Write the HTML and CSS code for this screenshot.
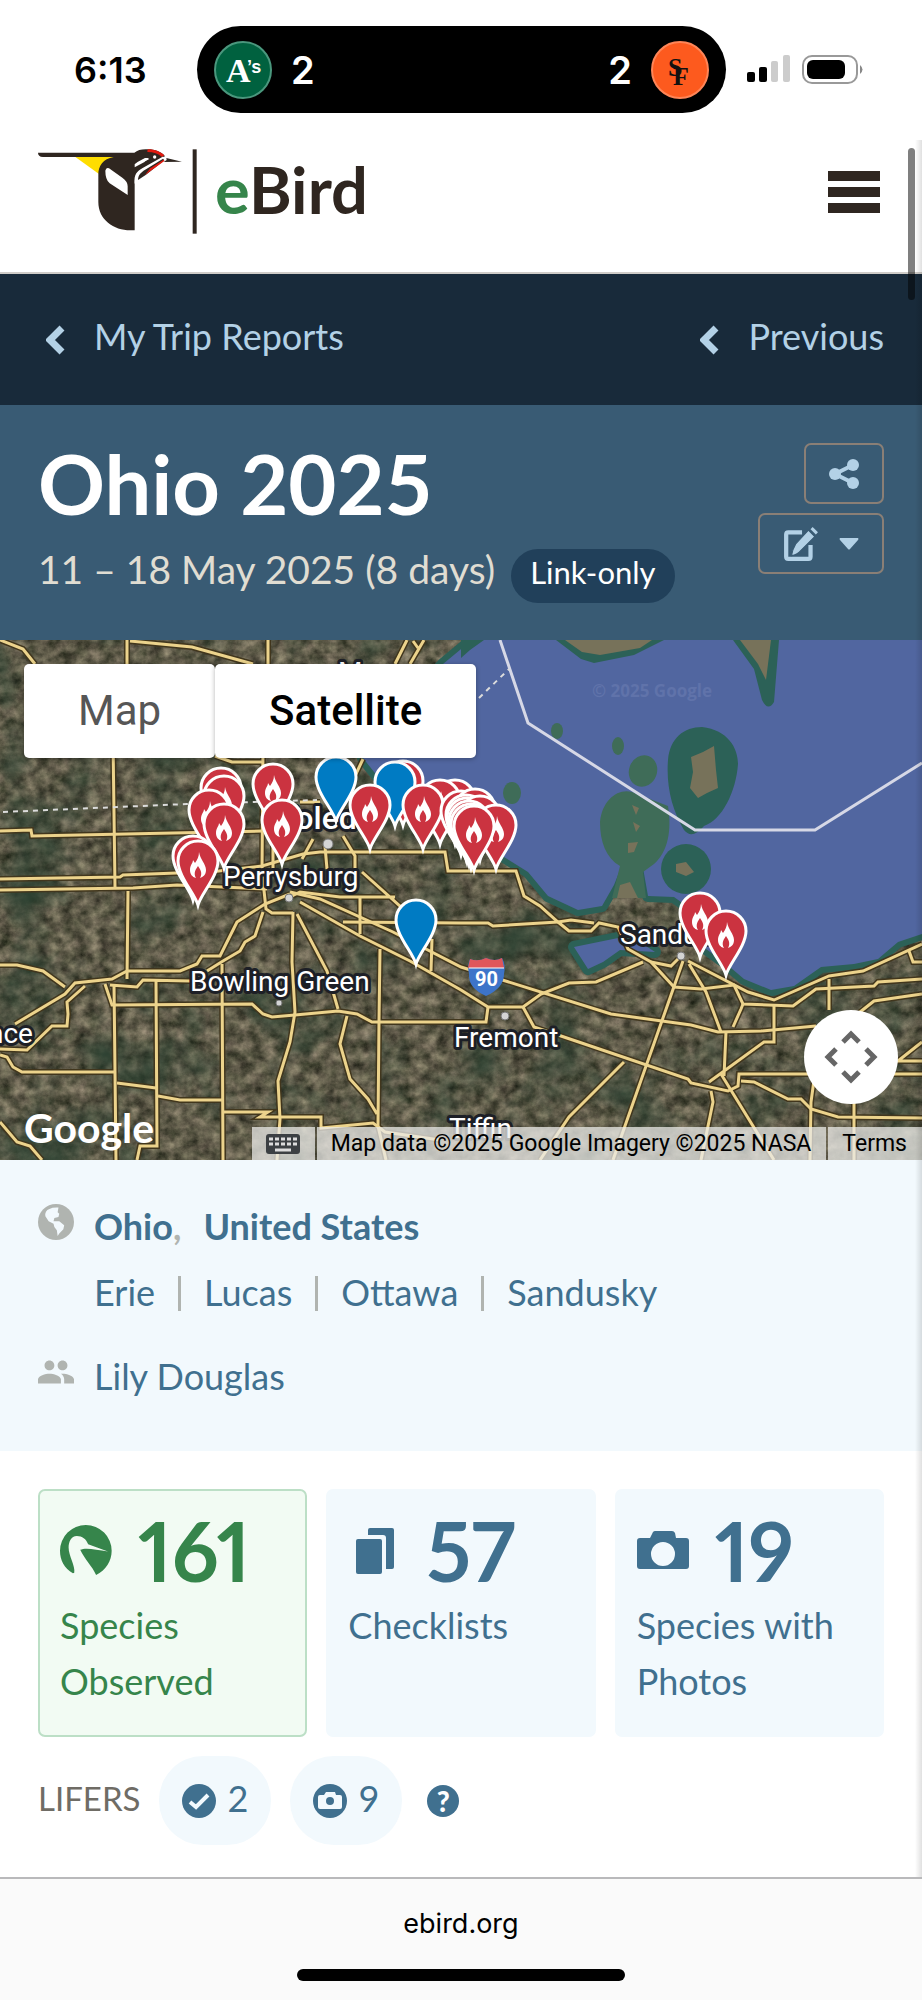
FILE: index.html
```html
<!DOCTYPE html>
<html lang="en">
<head>
    <meta charset="UTF-8">
    <meta name="viewport" content="width=device-width, initial-scale=1.0">
    <title>Ohio 2025 - eBird Trip Report</title>
    <link rel="stylesheet" href="styles.css">
</head>
<body>
    <div class="status-bar">
        <span class="clock">6:13</span>
        <div class="island">
            <svg class="team" viewBox="0 0 58 58">
                <circle cx="29" cy="29" r="28" fill="#00613f" stroke="#4a977d" stroke-width="2"/>
                <text x="12" y="41" class="team-a">A</text>
                <text x="33" y="32" class="team-s">’s</text>
            </svg>
            <span class="score">2</span>
            <span class="score score-right">2</span>
            <svg class="team" viewBox="0 0 58 58">
                <circle cx="29" cy="29" r="28" fill="#fd5a1e" stroke="#ff8557" stroke-width="2"/>
                <text x="17" y="35" class="team-sf">S</text>
                <text x="22" y="44" class="team-sf">F</text>
            </svg>
        </div>
        <div class="indicators">
            <svg width="44" height="28" viewBox="0 0 44 28">
                <rect x="0" y="17" width="8" height="10" rx="2"/>
                <rect x="12" y="12" width="8" height="15" rx="2"/>
                <rect x="24" y="6" width="7" height="21" rx="2" fill="#ccc"/>
                <rect x="36" y="0" width="7" height="27" rx="2" fill="#ccc"/>
            </svg>
            <svg width="62" height="30" viewBox="0 0 62 30">
                <rect x="1" y="1" width="54" height="27" rx="9" fill="none" stroke="#999" stroke-width="2"/>
                <rect x="5" y="5" width="38" height="19" rx="6"/>
                <path d="M58 10q5 4.500 0 9z" fill="#888"/>
            </svg>
        </div>
    </div>

    <header class="site-header">
        <a href="#" class="logo">
            <svg width="160" height="85" viewBox="113 448 480 255">
                <path d="M222 470H350L297 524z" fill="#fedd00"/>
                <path d="M113 459H402C412 451 425 448 442 449C465 449 482 457 493 468L490 480L420 524C408 530 403 538 403 548V692H390C340 692 294 660 294 607V525C294 498 308 478 340 472H128C118 472 113 466 113 459z" fill="#2f2620"/>
                <path d="M442 449C465 449 482 457 492 467L485 472C474 462 460 457 441 457z" fill="#e21a0f"/>
                <path d="M315 513Q317 502 326 506L366 534Q382 545 382 560V586L328 551Q315 540 315 513z" fill="#fff"/>
                <path d="M403 503V494Q405 490 434 475H442L448 479Z" fill="#fff"/>
                <path d="M433 486L456 473V480L440 491z" fill="#2f2620"/>
                <circle cx="463" cy="472" r="5" fill="#fff"/>
                <path d="M403 552C400 525 410 514 427 505L487 471L495 472L493 480L436 527L413 541z" fill="#fff"/>
                <path d="M413 541C413 528 421 519 432 512L488 477L492 482L437 525z" fill="#2f2620"/>
                <path d="M434 526L450 506L490 480L492 484z" fill="#e21a0f"/>
                <path d="M498 475L545 486L490 487L499 481z" fill="#2f2620"/>
                <rect x="577" y="449" width="12" height="253" fill="#2f2620"/>
            </svg>
            <span class="wordmark"><span class="wordmark-e">e</span>Bird</span>
        </a>
        <button class="menu-button" aria-label="Menu"><span></span><span></span><span></span></button>
    </header>

    <nav class="report-nav">
        <a href="#">
            <svg width="20" height="30" viewBox="0 0 20 30"><path d="M16 3L4 15L16 27" fill="none" stroke="currentColor" stroke-width="7"/></svg>
            My Trip Reports
        </a>
        <a href="#">
            <svg width="20" height="30" viewBox="0 0 20 30"><path d="M16 3L4 15L16 27" fill="none" stroke="currentColor" stroke-width="7"/></svg>
            Previous
        </a>
    </nav>

    <section class="report-header">
        <div class="report-title">
            <h1>Ohio 2025</h1>
            <div class="report-dates">
                <span>11 – 18 May 2025 (8 days)</span>
                <span class="badge">Link-only</span>
            </div>
        </div>
        <div class="report-actions">
            <button aria-label="Share">
                <svg width="30" height="30" viewBox="0 0 30 30" fill="currentColor">
                    <path d="M24 6L6 15L24 24" fill="none" stroke="currentColor" stroke-width="4"/>
                    <circle cx="6" cy="15" r="6"/><circle cx="24" cy="6" r="6"/><circle cx="24" cy="24" r="6"/>
                </svg>
            </button>
            <button aria-label="Edit">
                <svg width="36" height="36" viewBox="0 0 34 34">
                    <path d="M18 6H5Q3 6 3 8V29Q3 31 5 31H24Q26 31 26 29V18" fill="none" stroke="currentColor" stroke-width="4"/>
                    <path d="M24 4L30 10L17 23Q14 27 8 28Q9 22 12 17z" fill="currentColor" stroke="#395b74" stroke-width="1"/>
                    <path d="M26 3L28 1L33 6L31 8z" fill="currentColor"/>
                </svg>
                <svg width="20" height="12" viewBox="0 0 20 12"><path d="M1 0H19Q20 1 19 2L11 11Q10 12 9 11L1 2Q0 1 1 0z" fill="currentColor"/></svg>
            </button>
        </div>
    </section>

    <section class="map">
        <svg class="map-canvas" viewBox="0 0 922 520">
            <defs>
                <filter id="ground" x="0" y="0" width="100%" height="100%" color-interpolation-filters="sRGB">
                    <feTurbulence type="fractalNoise" baseFrequency="0.08 0.09" numOctaves="5" seed="8"/>
                    <feColorMatrix values="0.6 0 0 0 0.07  0.54 0.04 0 0 0.065  0.48 0 0 0 0.045  0 0 0 0 1"/>
                </filter>
                <filter id="forest" x="0" y="0" width="100%" height="100%" color-interpolation-filters="sRGB">
                    <feTurbulence type="fractalNoise" baseFrequency="0.015" numOctaves="5" seed="3"/>
                    <feColorMatrix values="0 0 0 0 0.16  0 0 0 0 0.25  0 0 0 0 0.19  0 2.200 0 0 -1.050"/>
                </filter>
                <g id="pin">
                    <path d="M0 -2C-3 -13 -20 -31 -20 -46A20 20 0 0 1 20 -46C20 -31 3 -13 0 -2z" stroke="#fff" stroke-width="3"/>
                </g>
                <g id="fire">
                    <use href="#pin" fill="#cb3340"/>
                    <path d="M1 -55C2 -48 8 -43 8 -37C8 -32 5 -30 2 -29C5 -34 2 -38 0 -41C-2 -38 -5 -34 -2 -29C-6 -30 -8 -33 -8 -37C-8 -42 -5 -44 -5 -47L-3 -44C-1 -47 1 -50 1 -55z" fill="#fff"/>
                </g>
                <g id="roads">
                    <path d="M0 0L23 9L35 24M127 0V24M130 1L192 7L253 24M268 0V24M407 0L395 24M424 0L410 24M413 1L418 8"/>
                    <path d="M113 100L115 247M215 116L232 122H263M263 110L262 232L266 269L272 273H293M363 119L355 136"/>
                    <path d="M0 191L31 190L32 196L262 191M0 250L133 248L177 245L267 249M128 251L127 339"/>
                    <path d="M0 239L120 237L123 235L177 233L210 232L262 226L303 214L320 212L445 212L448 231H516L524 256L540 266L558 282L569 291H591L599 283L618 287L628 309L651 322L674 347L701 349L734 345L743 364L793 366L816 349L874 346L878 342L922 339"/>
                    <path d="M343 196L355 216V229M313 199L302 219M325 206L327 229M273 205V232M300 162H320M362 232L400 266L426 282M290 257L300 252L340 257H395M360 257V294"/>
                    <path d="M343 282L461 283H488L493 286L558 282L571 280L594 283"/>
                    <path d="M290 252L320 259L393 292L461 327L611 374L691 385L718 392L761 391L816 386"/>
                    <path d="M300 262L360 296L410 321L461 350L488 367H523L541 354L569 343L596 342L643 322"/>
                    <path d="M651 322L671 326L678 319M683 321L613 520M688 321L748 352L774 360L829 336L863 331L922 304M689 324L706 352L721 392M743 364L741 369L733 387M726 392L724 436M774 366V402H764L709 442"/>
                    <path d="M488 367L486 382L461 382H372L357 374L338 371L295 375L272 377L263 374L252 364L112 365L105 344"/>
                    <path d="M523 367L534 387L561 396L688 439L691 443L728 451L738 446L739 434H922M741 441L754 442L788 459H801L811 469L838 477L922 478"/>
                    <path d="M721 434L774 520M711 451L713 462L701 520M624 422L569 477L540 520M814 440L811 462L810 520M854 440V520M829 339V370M855 376L874 361L922 354M909 311L913 322H922M885 421H898L922 402M898 421H922"/>
                    <path d="M0 325H17L43 331L65 347M15 384L65 354L75 343L112 339L127 331H180L197 324L202 316H220L237 282L265 264L290 254M85 346L67 362L68 374L67 386H52L27 410L0 409"/>
                    <path d="M0 415L7 417L13 427L22 432H115M0 482L17 502L30 506L42 520M114 344L116 520M110 345L137 347L143 340L190 341M156 340L157 506H140L137 520M222 324L223 520"/>
                    <path d="M207 331L223 321L240 311L245 302L255 296L263 272M117 443L156 448M158 456L180 460H222M223 472H268L260 477H321V488L373 483L385 492L440 500"/>
                    <path d="M293 272L292 322L295 372L290 402L278 441L280 479L277 520M297 274L327 331L338 369M347 376L340 404L350 439L368 459L377 474M380 309L379 382L378 486L386 520M432 299L431 331"/>
                </g>
            </defs>

            <rect width="922" height="520" fill="#5d5946"/>
            <rect width="922" height="520" filter="url(#ground)"/>
            <rect width="922" height="520" filter="url(#forest)"/>

            <!-- lake and shallows -->
            <g fill="#5166a0" stroke="#2c6157" stroke-width="12" stroke-linejoin="round" paint-order="stroke">
                <path d="M472 0L443 24L400 70L363 118L378 137L410 150L440 170L475 197L504 217L528 232L548 256L578 270L602 266L614 245L622 225L643 228L648 256L674 257L695 272L703 290L706 309L724 322L744 339L771 350L794 346L821 327L854 324L878 319L898 302L922 294V0z"/>
                <path d="M574 307L618 298L640 302L655 312L620 310L603 322L588 329z"/>
            </g>
            <g fill="#2c6157">
                <path d="M556 0L581 19L594 23L634 15L664 0zM733 0L754 29L762 60Q768 72 774 62L779 0zM461 18L470 10L484 0H461z"/>
                <path d="M668 120C670 98 684 87 702 87C728 90 738 108 738 124C736 152 722 180 704 186Q692 200 684 190C672 170 666 146 668 120z"/>
                <ellipse cx="686" cy="229" rx="25" ry="25"/>
            </g>
            <g fill="#3f6c58">
                <path d="M600 182C602 160 618 148 632 152L668 166C672 190 668 212 654 224L643 232L646 258H612L620 226C606 218 600 202 600 182z"/>
                <ellipse cx="643" cy="131" rx="14" ry="16" transform="rotate(20 643 131)"/>
                <ellipse cx="557" cy="91" rx="6" ry="8"/>
                <ellipse cx="618" cy="106" rx="6" ry="9"/>
                <ellipse cx="512" cy="153" rx="9" ry="11"/>
            </g>
            <g fill="#77725a">
                <path d="M565 0L582 12L600 15L640 8L652 0zM740 0L758 24L766 40L771 0z"/>
                <path d="M691 117L703 112L714 106L716 130L718 148L707 153L698 158L690 148L693 132z"/>
                <path d="M676 224L686 222L694 232L686 236L676 232zM628 203L638 202L634 212L628 213zM632 165L639 168L636 175zM633 182L640 186L636 192zM620 245L630 242L638 258H617z"/>
            </g>

            <use href="#roads" class="road-casing"/>
            <use href="#roads" class="road"/>

            <path d="M500 0L528 83L695 190H815L922 123" class="border-line"/>
            <path d="M3 172L187 164L317 160M479 58L509 29" class="state-line"/>

            <text x="592" y="57" class="map-watermark">© 2025 Google</text>

            <g fill="#d4d4d4" stroke="#777" stroke-width="1">
                <circle cx="328" cy="204" r="5"/><circle cx="289" cy="258" r="4"/><circle cx="681" cy="316" r="4"/>
                <circle cx="505" cy="376" r="4"/><circle cx="279" cy="363" r="3"/>
            </g>
            <g class="map-label">
                <text x="338" y="42">Monroe</text>
                <text x="278" y="189" class="map-label-big">Toledo</text>
                <text x="223" y="246">Perrysburg</text>
                <text x="190" y="351">Bowling Green</text>
                <text x="-76" y="403">Defiance</text>
                <text x="620" y="304">Sandusky</text>
                <text x="454" y="407">Fremont</text>
                <text x="449" y="498">Tiffin</text>
            </g>

            <path d="M470 319Q478 322 486 318Q495 322 502 318Q506 325 504 334Q504 348 486 356Q468 348 469 334Q467 325 470 319z" fill="#3d74c9"/>
            <path d="M470 319Q478 322 486 318Q495 322 502 318L504 328H468z" fill="#e0565a"/>
            <path d="M469 328H504" stroke="#fff" stroke-width="1"/>
            <text x="475" y="346" class="route-number">90</text>

            <use href="#fire" x="221" y="194"/><use href="#fire" x="224" y="202"/>
            <use href="#fire" x="209" y="216"/><use href="#fire" x="224" y="230"/>
            <use href="#fire" x="193" y="262"/><use href="#fire" x="198" y="267"/>
            <use href="#fire" x="273" y="190"/><use href="#fire" x="282" y="226"/>
            <use href="#pin" x="336" y="183" fill="#007bc3"/>
            <use href="#fire" x="403" y="187"/>
            <use href="#pin" x="395" y="188" fill="#007bc3"/>
            <use href="#fire" x="370" y="211"/>
            <use href="#fire" x="455" y="206"/><use href="#fire" x="440" y="206"/><use href="#fire" x="423" y="211"/>
            <use href="#fire" x="461" y="217"/><use href="#fire" x="475" y="215"/>
            <use href="#fire" x="466" y="221"/><use href="#fire" x="467" y="224"/>
            <use href="#fire" x="480" y="222"/><use href="#fire" x="469" y="227"/>
            <use href="#fire" x="496" y="231"/>
            <use href="#fire" x="471" y="230"/><use href="#fire" x="474" y="232"/>
            <use href="#fire" x="700" y="319"/><use href="#fire" x="726" y="337"/>
            <use href="#pin" x="416" y="326" fill="#007bc3"/>

            <text x="24" y="503" class="map-brand">Google</text>
        </svg>
        <div class="map-types">
            <button>Map</button>
            <button class="active">Satellite</button>
        </div>
        <button class="map-pan" aria-label="Pan the map">
            <svg width="54" height="54" viewBox="0 0 54 54" fill="none" stroke="#666" stroke-width="5">
                <path d="M19 12L27 4L35 12M19 42L27 50L35 42M12 19L4 27L12 35M42 19L50 27L42 35"/>
            </svg>
        </button>
        <div class="map-credits">
            <button aria-label="Keyboard shortcuts">
                <svg width="34" height="20" viewBox="0 0 34 20">
                    <rect width="34" height="20" rx="3" fill="#3c4043"/>
                    <path d="M3 5H31M3 10H31" stroke="#ddd" stroke-width="3" stroke-dasharray="4 2"/>
                    <path d="M9 16H25" stroke="#ddd" stroke-width="3"/>
                </svg>
            </button>
            <span>Map data ©2025 Google Imagery ©2025 NASA</span>
            <a href="#">Terms</a>
        </div>
    </section>

    <section class="report-info">
        <svg class="info-icon" viewBox="1 1 22 22" fill="#b0b4b0">
            <circle cx="12" cy="12" r="11"/>
            <path d="M13.500 3.200L13 6L14 7L13.500 9L11 9.500L10.500 11.500H14L17 14L16.500 16.500L14 19L13 20.500L12.500 17L11 15L10.500 13L7.500 11.500L5.500 8.500Q5 5 8 4Q10 3 13.500 3.200z" fill="#f2f9fd"/>
        </svg>
        <div>
            <div class="region"><a href="#">Ohio</a><span>,</span><a href="#">United States</a></div>
            <div class="counties">
                <a href="#">Erie</a>
                <a href="#">Lucas</a>
                <a href="#">Ottawa</a>
                <a href="#">Sandusky</a>
            </div>
        </div>
        <svg class="info-icon" viewBox="1 1 22 22" fill="#b0b4b0">
            <path d="M16 11c1.660 0 2.990-1.340 2.990-3S17.660 5 16 5s-3 1.340-3 3 1.340 3 3 3zm-8 0c1.660 0 2.990-1.340 2.990-3S9.660 5 8 5 5 6.340 5 8s1.340 3 3 3zm0 2c-2.330 0-7 1.170-7 3.500V19h14v-2.500C15 14.170 10.330 13 8 13zm8 0c-.29 0-.62.02-.97.05 1.160.84 1.970 1.970 1.970 3.450V19h6v-2.500c0-2.330-4.670-3.500-7-3.500z"/>
        </svg>
        <a href="#">Lily Douglas</a>
    </section>

    <main class="stats">
        <div class="cards">
            <a href="#" class="card selected">
                <span class="count">
                    <svg width="52" height="52" viewBox="183 200 157 157">
                        <path d="M222 349C196 334 183 309 183 281A78 78 0 0 1 339 281C339 312 321 340 292 354C280 327 258 308 244 278C260 270 290 277 328 283L268 261C262 245 250 236 234 236C216 236 209 254 209 271C209 296 230 328 226 347z" fill="currentColor"/>
                    </svg>
                    161
                </span>
                Species Observed
            </a>
            <a href="#" class="card">
                <span class="count">
                    <svg width="52" height="52" viewBox="0 0 52 52" fill="currentColor">
                        <rect x="8" y="15" width="26" height="35" rx="2"/>
                        <path d="M20 9V6Q20 4 22 4H44Q46 4 46 6V43Q46 45 44 45H38V14Q38 11 35 11H20z"/>
                    </svg>
                    57
                </span>
                Checklists
            </a>
            <a href="#" class="card">
                <span class="count">
                    <svg width="52" height="52" viewBox="0 0 52 52">
                        <path d="M3 14H13L16 8Q17 7 18 7H35Q37 7 38 9L39 14H49Q52 14 52 17V42Q52 45 49 45H3Q0 45 0 42V17Q0 14 3 14zM26 18A12 12 0 1 0 26 42A12 12 0 1 0 26 18z" fill="currentColor" fill-rule="evenodd"/>
                    </svg>
                    19
                </span>
                Species with Photos
            </a>
        </div>
        <div class="lifers">
            <span class="lifers-title">LIFERS</span>
            <a href="#" class="pill">
                <svg width="34" height="34" viewBox="0 0 34 34">
                    <circle cx="17" cy="17" r="17" fill="currentColor"/>
                    <path d="M8 18L14 23L26 11" fill="none" stroke="#f2f9fd" stroke-width="4"/>
                </svg>
                2
            </a>
            <a href="#" class="pill">
                <svg width="34" height="34" viewBox="0 0 34 34">
                    <circle cx="17" cy="17" r="17" fill="currentColor"/>
                    <path d="M7 11H11L13 8H22L23 11H27Q29 11 29 13V23Q29 25 27 25H7Q5 25 5 23V13Q5 11 7 11z" fill="#f2f9fd"/>
                    <circle cx="17" cy="17" r="4" fill="currentColor"/>
                </svg>
                9
            </a>
            <button class="help" aria-label="Help">?</button>
        </div>
    </main>

    <footer class="browser-bar">
        <span>ebird.org</span>
        <div class="home-indicator"></div>
    </footer>
    <div class="scrollbar"></div>
</body>
</html>
```

FILE: styles.css
```css
* {
    box-sizing: border-box;
}
body {
    margin: 0;
    min-height: 100vh;
    display: flex;
    flex-direction: column;
    position: relative;
    background-color: #fff;
    color: #40708f;
    font-family: Lato, sans-serif;
    font-size: 36px;
    line-height: 56px;
}
a {
    color: inherit;
    text-decoration: none;
}
button {
    padding: 0;
    border: 0;
    background: none;
    color: inherit;
    font: inherit;
    cursor: pointer;
}
svg {
    display: block;
    flex: none;
}

/* phone status bar */
.status-bar {
    display: flex;
    align-items: center;
    padding: 26px 58px 24px 74px;
    color: #000;
    font-family: Inter, sans-serif;
    font-weight: 600;
}
.clock {
    width: 123px;
    font-size: 36px;
}
.island {
    flex: 1;
    display: flex;
    align-items: center;
    gap: 19px;
    height: 87px;
    padding: 0 17px;
    border-radius: 44px;
    background-color: #000;
}
.team {
    width: 58px;
    height: 58px;
}
.team-a {
    font: bold 34px "Liberation Serif", serif;
    fill: #fff;
}
.team-s {
    font: bold 18px "Liberation Sans", sans-serif;
    fill: #fff;
}
.team-sf {
    font: bold 26px "Liberation Serif", serif;
    fill: #111;
}
.score {
    color: #fff;
    font-size: 38px;
}
.score-right {
    margin-left: auto;
}
.indicators {
    display: flex;
    gap: 11px;
    padding-left: 21px;
}

.site-header {
    display: flex;
    align-items: flex-start;
    justify-content: space-between;
    height: 137px;
    padding: 12px 42px 0 38px;
    border-bottom: 2px solid #cfccc8;
}
.logo {
    display: flex;
    align-items: center;
    gap: 17px;
    color: #2f2620;
}
.wordmark {
    padding-bottom: 5px;
    font-size: 65px;
    font-weight: bold;
    line-height: 80px;
}
.wordmark-e {
    color: #36854b;
}
.menu-button {
    display: flex;
    flex-direction: column;
    gap: 6px;
    width: 52px;
    margin-top: 22px;
}
.menu-button span {
    width: 100%;
    height: 10px;
    background-color: #2f2620;
}

.report-nav {
    display: flex;
    justify-content: space-between;
    padding: 34px 38px 41px 46px;
    background-color: #182a3a;
    color: #b3d1e6;
}
.report-nav a {
    display: flex;
    align-items: center;
    gap: 28px;
}
.report-nav svg {
    margin-top: 7px;
}

.report-header {
    display: flex;
    justify-content: space-between;
    padding: 38px 38px 37px;
    background-color: #395b74;
}
h1 {
    margin: 0;
    color: #fff;
    font-size: 83px;
    line-height: 80px;
}
.report-dates {
    display: flex;
    align-items: baseline;
    gap: 16px;
    margin-top: 18px;
    color: #e0ddd2;
    font-size: 39px;
}
.badge {
    padding: 0 19px 8px;
    border-radius: 28px;
    background-color: #21405a;
    color: #fff;
    font-size: 31px;
    line-height: 46px;
}
.report-actions {
    display: flex;
    flex-direction: column;
    align-items: flex-end;
    gap: 9px;
    color: #b3d1e6;
}
.report-actions button {
    display: flex;
    align-items: center;
    gap: 20px;
    height: 61px;
    padding: 0 23px;
    border: 2px solid #8a7f76;
    border-radius: 7px;
}

.map {
    position: relative;
    overflow: hidden;
}
.map-canvas {
    width: 100%;
    height: auto;
}
.road-casing {
    fill: none;
    stroke: #41361d;
    stroke-width: 6px;
}
.road {
    fill: none;
    stroke: #ecd38c;
    stroke-width: 3px;
}
.border-line {
    fill: none;
    stroke: #d6d8e6;
    stroke-width: 3px;
}
.state-line {
    fill: none;
    stroke: #dcdcdc;
    stroke-width: 2px;
    stroke-dasharray: 5 5;
}
.map-label {
    font: 28px Roboto, sans-serif;
    fill: #fff;
    stroke: #1d1f26;
    stroke-width: 6px;
    stroke-linejoin: round;
    paint-order: stroke;
}
.map-label-big {
    font-size: 32px;
    font-weight: 500;
}
.map-watermark {
    font: bold 17px "Open Sans", sans-serif;
    fill: #6073aa;
}
.map-brand {
    font: bold 41px Lato, sans-serif;
    fill: #fff;
}
.route-number {
    font: bold 20px Roboto, sans-serif;
    fill: #fff;
}
.map-types {
    position: absolute;
    top: 24px;
    left: 24px;
    display: flex;
    font-family: Roboto, sans-serif;
    font-size: 42px;
}
.map-types button {
    height: 94px;
    padding: 0 54px;
    border-radius: 5px;
    background-color: #fff;
    color: #565656;
    box-shadow: 0 1px 5px rgba(0, 0, 0, 0.3);
}
.map-types .active {
    color: #000;
    font-weight: 500;
}
.map-pan {
    position: absolute;
    right: 24px;
    bottom: 56px;
    display: flex;
    align-items: center;
    justify-content: center;
    width: 94px;
    height: 94px;
    border-radius: 50%;
    background-color: #fff;
}
.map-credits {
    position: absolute;
    right: 0;
    bottom: 0;
    display: flex;
    color: #000;
    font-family: Roboto, sans-serif;
    font-size: 23px;
    line-height: 33px;
}
.map-credits > * {
    padding: 0 15px 0 14px;
    background-color: rgba(235, 235, 232, 0.75);
}
.map-credits > * + * {
    margin-left: 2px;
}

.report-info {
    display: grid;
    grid-template-columns: 36px 1fr;
    gap: 28px 20px;
    padding: 38px 38px 47px;
    background-color: #f2f9fd;
}
.info-icon {
    width: 36px;
    height: 36px;
    margin-top: 6px;
}
.region {
    display: flex;
    margin-bottom: 10px;
    font-weight: bold;
}
.region span {
    margin-right: 22px;
    color: #b0b4b0;
}
.counties {
    display: flex;
    flex-wrap: wrap;
    align-items: center;
}
.counties a + a::before {
    content: "";
    display: inline-block;
    width: 3px;
    height: 35px;
    margin: 0 23px;
    background-color: #b0b4b0;
    vertical-align: -5px;
}

.stats {
    flex: 1;
    padding: 38px 38px 31px;
}
.cards {
    display: grid;
    grid-template-columns: repeat(3, 1fr);
    gap: 19px;
}
.card {
    padding: 12px 20px 26px;
    border: 2px solid #f2f9fd;
    border-radius: 7px;
    background-color: #f2f9fd;
}
.card.selected {
    border-color: #bcdfc6;
    background-color: #f2fbf3;
    color: #36854b;
}
.count {
    display: flex;
    align-items: center;
    gap: 26px;
    font-size: 82px;
    font-weight: bold;
    font-variant-numeric: proportional-nums;
    line-height: 94px;
}
.lifers {
    display: flex;
    align-items: center;
    gap: 19px;
    margin-top: 19px;
    color: #6f6c65;
}
.lifers-title {
    padding-bottom: 6px;
    font-size: 33px;
}
.pill {
    display: flex;
    align-items: center;
    gap: 11px;
    height: 89px;
    padding: 0 23px 6px;
    border-radius: 44px;
    background-color: #f2f9fd;
    color: #40708f;
}
.pill svg {
    margin-top: 6px;
}
.help {
    width: 32px;
    height: 32px;
    margin-left: 6px;
    border-radius: 50%;
    background-color: #40708f;
    color: #fff;
    font-size: 28px;
    font-weight: 900;
    line-height: 32px;
}

/* browser chrome */
.browser-bar {
    display: flex;
    flex-direction: column;
    align-items: center;
    gap: 31px;
    padding: 31px 0 19px;
    border-top: 2px solid #b9b9bb;
    background-color: #fafafa;
    color: #000;
    font-family: Inter, sans-serif;
    font-size: 27px;
    line-height: 28px;
}
.home-indicator {
    width: 328px;
    height: 12px;
    border-radius: 6px;
    background-color: #000;
}
.scrollbar {
    position: absolute;
    top: 148px;
    right: 7px;
    width: 7px;
    height: 152px;
    border-radius: 4px;
    background-color: rgba(0, 0, 0, 0.5);
}
/* soft shade along the right edge of the page */
body::after {
    content: "";
    position: absolute;
    top: 140px;
    right: 0;
    bottom: 123px;
    width: 7px;
    background: linear-gradient(to left, rgba(0, 0, 0, 0.12), rgba(0, 0, 0, 0));
}
```
